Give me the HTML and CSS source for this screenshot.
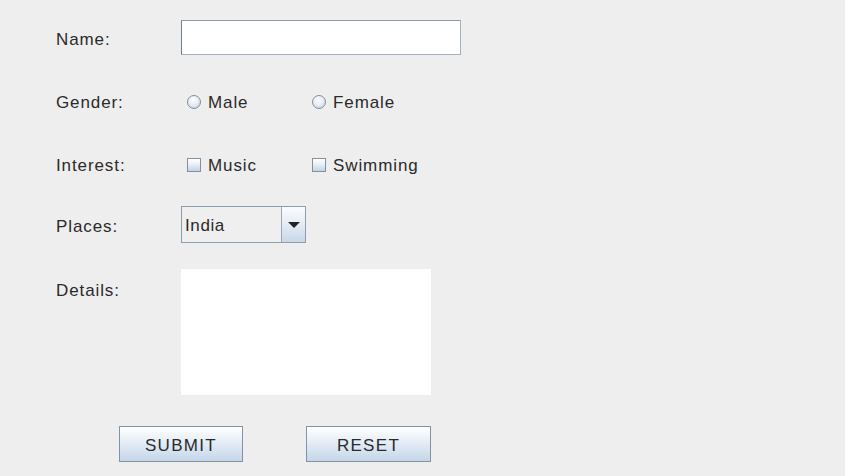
FILE: index.html
```html
<!DOCTYPE html>
<html>
<head>
<meta charset="utf-8">
<link rel="stylesheet" href="styles.css">
</head>
<body>
<form class="form">
  <div class="row row-name">
    <label class="label">Name:</label>
    <div class="textfield"></div>
  </div>
  <div class="row row-gender">
    <label class="label">Gender:</label>
    <div class="options">
      <span class="option"><span class="radio"></span><span class="opt-text">Male</span></span>
      <span class="option"><span class="radio"></span><span class="opt-text">Female</span></span>
    </div>
  </div>
  <div class="row row-interest">
    <label class="label">Interest:</label>
    <div class="options">
      <span class="option"><span class="check"></span><span class="opt-text">Music</span></span>
      <span class="option"><span class="check"></span><span class="opt-text">Swimming</span></span>
    </div>
  </div>
  <div class="row row-places">
    <label class="label">Places:</label>
    <div class="combo">
      <span class="combo-text">India</span>
      <span class="combo-btn"><span class="arrow"></span></span>
    </div>
  </div>
  <div class="row row-details">
    <label class="label label-top">Details:</label>
    <div class="textarea"></div>
  </div>
  <div class="buttons">
    <span class="btn btn-submit">SUBMIT</span>
    <span class="btn btn-reset">RESET</span>
  </div>
</form>
</body>
</html>
```
FILE: styles.css
```css
html, body {
  margin: 0;
  padding: 0;
  background: #eeeeee;
}
body {
  width: 845px;
  height: 476px;
  overflow: hidden;
  font-family: "Liberation Sans", Arial, sans-serif;
  font-size: 17px;
  color: #2a2a2a;
}
.form {
  display: flex;
  flex-direction: column;
  padding: 20px 0 0 56px;
}
.row {
  display: flex;
  align-items: center;
}
.label {
  width: 125px;
  flex: none;
  line-height: 20px;
  letter-spacing: 0.9px;
}
.row-name { height: 35px; }
.row-name .label { padding-top: 5px; }
.textfield {
  width: 278px;
  height: 33px;
  background: #ffffff;
  border: 1px solid #a3b0bd;
  border-left-color: #6f808f;
  border-top-color: #8d9cab;
}
.row-gender { height: 20px; margin-top: 37px; }
.row-interest { height: 20px; margin-top: 43px; }
.options { display: flex; }
.option {
  width: 125px;
  display: flex;
  align-items: center;
  padding-left: 6px;
  box-sizing: border-box;
}
.opt-text {
  margin-left: 7px;
  letter-spacing: 0.9px;
  line-height: 20px;
  padding-top: 2px;
}
.radio {
  width: 14px;
  height: 14px;
  box-sizing: border-box;
  border-radius: 50%;
  border: 1px solid #8191a0;
  background: radial-gradient(circle at 45% 35%, #ffffff 0%, #e8eef5 45%, #b9c9da 100%);
}
.check {
  width: 14px;
  height: 14px;
  box-sizing: border-box;
  border: 1px solid #8191a0;
  background: linear-gradient(#ffffff, #edf2f7 40%, #c3d2e2);
}
.row-gender .label, .row-interest .label { padding-top: 2px; }
.row-places { height: 37px; margin-top: 31px; }
.row-places .label { padding-top: 5px; }
.combo {
  width: 125px;
  height: 37px;
  box-sizing: border-box;
  border: 1px solid #8f9eac;
  display: flex;
  background: #efefef;
}
.combo-text {
  flex: 1;
  padding-left: 3px;
  padding-top: 2px;
  line-height: 34px;
  letter-spacing: 0.6px;
  border-right: 1px solid #9aa8b6;
}
.combo-btn {
  width: 23px;
  display: flex;
  align-items: center;
  justify-content: center;
  background: linear-gradient(#fbfcfe, #e3ebf4 50%, #c8d7e7);
}
.arrow {
  width: 0;
  height: 0;
  border-left: 6px solid transparent;
  border-right: 6px solid transparent;
  border-top: 6px solid #222222;
}
.row-details { align-items: flex-start; margin-top: 26px; }
.label-top { padding-top: 12px; }
.textarea {
  width: 250px;
  height: 126px;
  background: #ffffff;
}
.buttons {
  display: flex;
  gap: 63px;
  margin-top: 31px;
  margin-left: 63px;
}
.btn {
  height: 36px;
  box-sizing: border-box;
  border: 1px solid #8293a3;
  background: linear-gradient(#ffffff, #eaf1f8 35%, #c5d6e8);
  display: flex;
  align-items: center;
  justify-content: center;
  letter-spacing: 1.3px;
  padding-top: 3px;
}
.btn-submit { width: 124px; }
.btn-reset { width: 125px; }
```
